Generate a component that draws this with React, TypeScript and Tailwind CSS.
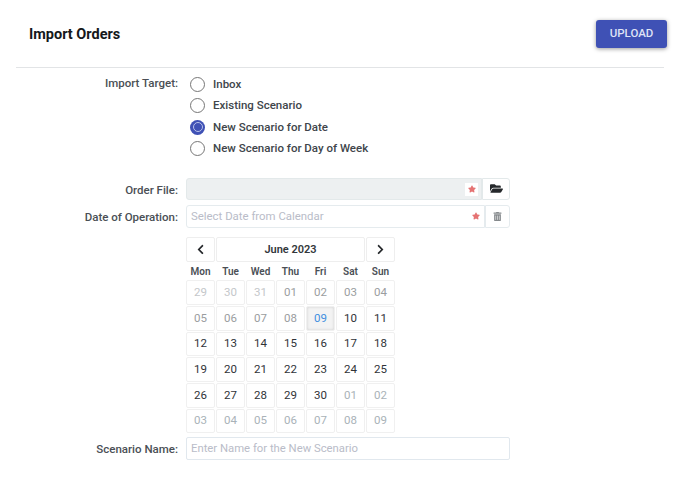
import { FaChevronLeft, FaChevronRight, FaFolderOpen, FaTrashAlt, FaStar } from 'react-icons/fa'

const WEEKDAYS = ['Mon', 'Tue', 'Wed', 'Thu', 'Fri', 'Sat', 'Sun']

// tone: 0 = previous month, 1 = faded, 2 = current month, 3 = selected, 4 = next month
const DAYS: { label: string; tone: number }[] = [
  ...['29', '30', '31'].map(label => ({ label, tone: 0 })),
  ...['01', '02', '03', '04', '05', '06', '07', '08'].map(label => ({ label, tone: 1 })),
  { label: '09', tone: 3 },
  ...Array.from({ length: 21 }, (_, i) => ({ label: String(i + 10), tone: 2 })),
  ...['01', '02', '03', '04', '05', '06', '07', '08', '09'].map(label => ({ label, tone: 4 })),
]

const toneClass = (tone: number) => {
  if (tone === 0) return 'text-[#c4c7ca]'
  if (tone === 1) return 'text-[#9a9da0]'
  if (tone === 3) return 'text-[#3f8fe0] bg-[#f3f3f3] border-[#e3e3e3] shadow-[inset_0_0_3px_rgba(0,0,0,0.15)]'
  if (tone === 4) return 'text-[#a9b2b8]'
  return 'text-[#2f3338]'
}

const Label = ({ children, className = '' }: { children: string; className?: string }) => (
  <div className={`w-[162px] shrink-0 text-right text-[11.5px] font-medium text-[#4a4f55] ${className}`}>{children}</div>
)

const Radio = ({ label, checked = false }: { label: string; checked?: boolean }) => (
  <div className="flex h-[21.33px] items-center">
    {checked ? (
      <span className="flex h-[15px] w-[15px] items-center justify-center rounded-full bg-[#3f51b5]">
        <span className="h-[10px] w-[10px] rounded-full border-[1.5px] border-[#b9c1ea] bg-[#3f51b5]" />
      </span>
    ) : (
      <span className="h-[15px] w-[15px] rounded-full border border-[#767676] bg-white" />
    )}
    <span className="ml-2 text-[11.5px] font-medium text-[#40454b]">{label}</span>
  </div>
)

const Required = () => <FaStar className="text-[8px] text-[#e57373]" />

export default function App() {
  return (
    <div className="h-[490px] w-[688px] bg-white font-['Roboto',sans-serif]">
      <div className="mx-[16px] flex h-[68px] w-[648px] items-center justify-between border-b border-[#e2e4e6]">
        <h1 className="ml-[13px] mt-[3px] text-[14.5px] font-bold text-[#15181b]">Import Orders</h1>
        <button className="mr-[-3px] mt-[1px] h-[28px] w-[71px] rounded-[3px] bg-[#3f51b5] text-[11.5px] font-medium text-[#dfe3f5] shadow-[0_1px_4px_rgba(0,0,0,0.4)]">
          UPLOAD
        </button>
      </div>

      <div className="ml-[16px] flex flex-col">
        <div className="mt-[6px] flex">
          <div className="mt-[1px]">
            <Label>Import Target:</Label>
          </div>
          <div className="ml-[12px]">
            <Radio label="Inbox" />
            <Radio label="Existing Scenario" />
            <Radio label="New Scenario for Date" checked />
            <Radio label="New Scenario for Day of Week" />
          </div>
        </div>

        <div className="mt-[18px] flex h-[23px] items-center">
          <Label className="pt-[4px]">Order File:</Label>
          <div className="ml-[8px] flex h-[22px] w-[324px]">
            <div className="flex w-[296px] items-center justify-end rounded-l-[3px] border border-[#e3e9ea] bg-[#edf0f1] pr-[3px]">
              <span className="mt-[1px] flex h-[13px] w-[13px] items-center justify-center bg-white">
                <Required />
              </span>
            </div>
            <div className="flex flex-1 items-center justify-center rounded-r-[3px] border border-[#e3e9ea] bg-white text-[13px] text-[#25282b]">
              <FaFolderOpen />
            </div>
          </div>
        </div>

        <div className="mt-[4px] flex h-[24px] items-center">
          <Label className="pt-[2px]">Date of Operation:</Label>
          <div className="ml-[8px] flex h-[23px] w-[324px]">
            <div className="flex w-[299px] items-center justify-between rounded-l-[3px] border border-[#e5ebee] pl-[4px] pr-[4px] text-[11.4px] text-[#b9bcc8]">
              <span>Select Date from Calendar</span>
              <Required />
            </div>
            <div className="flex flex-1 items-center justify-center rounded-r-[3px] border border-[#e5ebee] text-[9px] text-[#85898c]">
              <FaTrashAlt />
            </div>
          </div>
        </div>

        <div className="ml-[170px] mt-[9px] w-[209px]">
          <div className="flex h-[25px] gap-[1px]">
            <div className="flex w-[29px] items-center justify-center rounded-[2px] border border-[#eeeeee] text-[11px] text-[#25282b]">
              <FaChevronLeft />
            </div>
            <div className="flex flex-1 items-center justify-center rounded-[2px] border border-[#eeeeee] text-[11px] font-semibold text-[#33373b]">
              June 2023
            </div>
            <div className="flex w-[29px] items-center justify-center rounded-[2px] border border-[#eeeeee] text-[11px] text-[#25282b]">
              <FaChevronRight />
            </div>
          </div>
          <div className="grid h-[18px] grid-cols-[repeat(7,29px)] items-center gap-x-[1px] pt-[1px]">
            {WEEKDAYS.map(day => (
              <div key={day} className="text-center text-[10px] font-semibold text-[#4a4f55]">
                {day}
              </div>
            ))}
          </div>
          <div className="grid grid-cols-[repeat(7,29px)] gap-x-[1px] gap-y-[1px]">
            {DAYS.map((day, i) => (
              <div
                key={i}
                className={`flex h-[24.7px] items-center justify-center rounded-[2px] border border-[#f0f0f0] text-[11.5px] ${toneClass(day.tone)}`}
              >
                {day.label}
              </div>
            ))}
          </div>
        </div>

        <div className="mt-[4px] flex h-[23px] items-center">
          <Label className="pt-[2px]">Scenario Name:</Label>
          <div className="ml-[8px] flex h-[23px] w-[324px] items-center rounded-[2px] border border-[#e1e8ee] pl-[4px] pt-[1px] text-[11.3px] text-[#b9bcc8]">
            Enter Name for the New Scenario
          </div>
        </div>
      </div>
    </div>
  )
}
